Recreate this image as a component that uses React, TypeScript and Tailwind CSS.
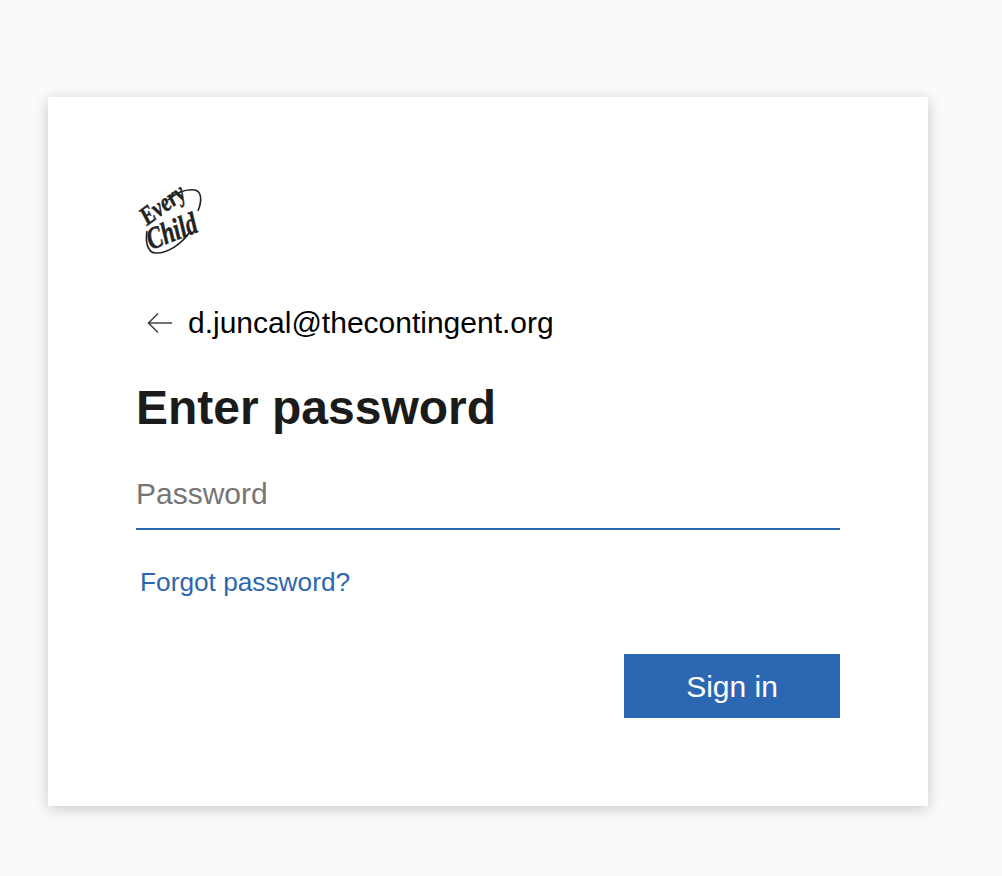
const Logo = () => (
  <svg width="62" height="68" viewBox="0 0 62 68" className="block overflow-visible">
    <path d="M5 44 C 3 56 6 65 13 66 C 26 67 40 56 47 46" fill="none" stroke="#222" strokeWidth="1.6" />
    <path d="M26 13 C 34 6 44 2 53 3 C 60 5 60 14 56 24" fill="none" stroke="#222" strokeWidth="1.6" />
    <g fill="#222" stroke="#222" strokeWidth="0.5" fontFamily='"Liberation Serif", serif' fontStyle="italic" fontWeight="700">
      <text x="5" y="39" fontSize="26" transform="rotate(-36 5 39)" textLength="50" lengthAdjust="spacingAndGlyphs">Every</text>
      <text x="9" y="63" fontSize="31" transform="rotate(-21 9 63)" textLength="52" lengthAdjust="spacingAndGlyphs">Child</text>
    </g>
  </svg>
);

const App = () => {
  return (
    <div className="min-h-[876px] bg-[#f9fafc] pl-[48px] pt-[97px] font-['Liberation_Sans',Arial,sans-serif]">
      <div className="h-[709px] w-[880px] bg-white pl-[88px] pr-[88px] pt-[90px] shadow-[0_3px_14px_rgba(0,0,0,0.2)]">
        <div className="ml-[6px] h-[68px]">
          <Logo />
        </div>
        <div className="mt-[48px] flex h-[40px] items-center">
          <svg width="28" height="24" viewBox="0 0 28 24" className="ml-[10px] shrink-0">
            <path d="M2.5 12 H26 M12 2.5 L2.5 12 L12 21.5" fill="none" stroke="#444" strokeWidth="1.6" />
          </svg>
          <span className="ml-[14px] text-[30px] leading-[40px] text-black">d.juncal@thecontingent.org</span>
        </div>
        <h1 className="mt-[35px] text-[48px] font-bold leading-[60px] text-[#1b1b1b]">Enter password</h1>
        <div className="mt-[32px] h-[60px] border-b-2 border-[#2b67b2] text-[30px] leading-[48px] text-[#757575]">Password</div>
        <div className="mt-[34px] pl-[4px]">
          <a className="text-[26.25px] leading-[36px] text-[#2b67b2]">Forgot password?</a>
        </div>
        <div className="mt-[54px] flex justify-end">
          <button className="h-[64px] w-[216px] bg-[#2b67b2] text-[30px] text-white">Sign in</button>
        </div>
      </div>
    </div>
  );
};

export default App;
